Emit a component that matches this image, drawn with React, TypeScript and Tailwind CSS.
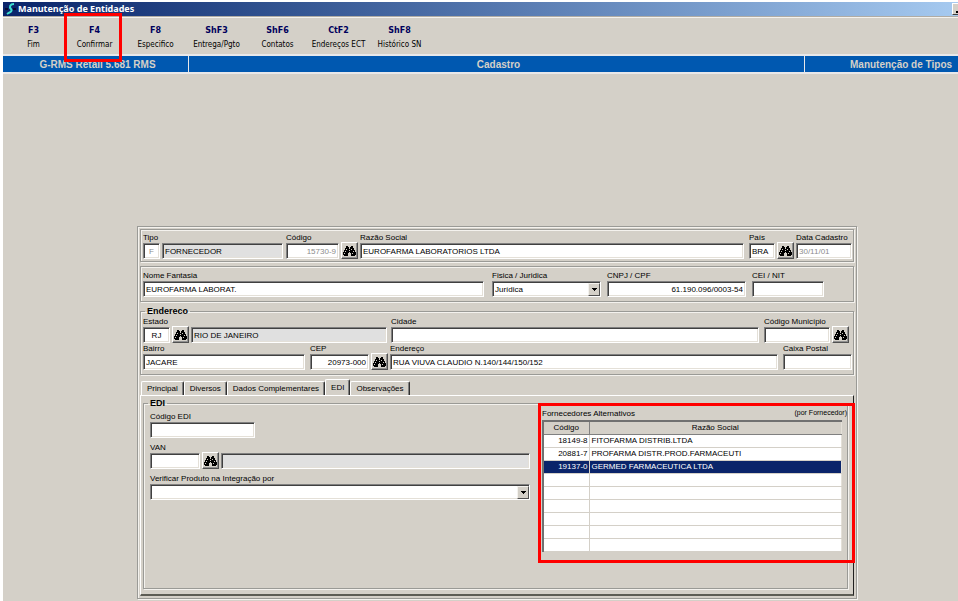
import { useId } from "react";
import type { ReactNode } from "react";

const sunken =
  "block h-4 w-full min-w-0 rounded-none border border-t-[#808080] border-l-[#808080] border-b-white border-r-white px-[2px] text-[8px] leading-[12px] shadow-[inset_1px_1px_0_#404040,inset_-1px_-1px_0_#e4e0d8] outline-none";
const etched =
  "border border-[#9a9a96] shadow-[inset_1px_1px_0_#f4f2ee,1px_1px_0_#f4f2ee]";
const caption = "h-[11px] text-[8px] leading-[11px] whitespace-nowrap";

type FieldProps = {
  label?: string;
  name?: string;
  value?: string;
  className: string;
  tone?: string;
};

function Field({ label, name, value = "", className, tone = "bg-white text-black" }: FieldProps) {
  const id = useId();
  return (
    <div className={`flex flex-col ${className}`}>
      {label && (
        <label htmlFor={id} className={caption}>
          {label}
        </label>
      )}
      <input
        id={id}
        aria-label={label ? undefined : name}
        defaultValue={value}
        className={`${sunken} ${tone}`}
      />
    </div>
  );
}

function Select({ label, options, className }: { label: string; options: string[]; className: string }) {
  const id = useId();
  return (
    <div className={`flex flex-col ${className}`}>
      <label htmlFor={id} className={caption}>
        {label}
      </label>
      <div className="relative">
        <select id={id} className={`${sunken} appearance-none bg-white pt-px`}>
          {options.map((o) => (
            <option key={o}>{o}</option>
          ))}
        </select>
        <span className="pointer-events-none absolute top-[2px] right-[1px] flex h-[13px] w-3 items-center justify-center border border-t-[#f4f2ee] border-l-[#f4f2ee] border-r-[#505050] border-b-[#505050] bg-[#d4d0c8]">
          <svg width="7" height="4" viewBox="0 0 7 4" shapeRendering="crispEdges">
            <path d="M1 0h5v1h-1v1h-1v1h-1v-1h-1v-1h-1z" fill="#000" />
          </svg>
        </span>
      </div>
    </div>
  );
}

function SearchButton({ name }: { name: string }) {
  return (
    <button
      type="button"
      aria-label={name}
      className="flex h-[17px] w-[17px] shrink-0 items-center justify-center border border-t-white border-l-white border-r-[#505050] border-b-[#505050] bg-[#d4d0c8] shadow-[inset_-1px_-1px_0_#909090]"
    >
      <svg width="13" height="10" viewBox="0 0 13 10" shapeRendering="crispEdges">
        <path
          d="M3 0h2v1h1v2h1V1h1V0h2v2h1v2h1v2h1v3h-1v1H8V7H7V6H6v1H5v3H1V9H0V6h1V4h1V2h1z"
          fill="#000"
        />
        <path
          d="M3 3h1v1H3zM8 3h1v1H8zM2 5h1v1H2zM10 5h1v1h-1zM1 7h1v1H1zM9 7h1v1H9zM6 4h1v1H6z"
          fill="#d4d0c8"
        />
      </svg>
    </button>
  );
}

const actions = [
  ["F3", "Fim"],
  ["F4", "Confirmar"],
  ["F8", "Especifico"],
  ["ShF3", "Entrega/Pgto"],
  ["ShF6", "Contatos"],
  ["CtF2", "Endereços ECT"],
  ["ShF8", "Histórico SN"],
];

const suppliers = [
  ["18149-8", "FITOFARMA DISTRIB.LTDA"],
  ["20881-7", "PROFARMA DISTR.PROD.FARMACEUTI"],
  ["19137-0", "GERMED FARMACEUTICA LTDA"],
  ["", ""],
  ["", ""],
  ["", ""],
  ["", ""],
  ["", ""],
  ["", ""],
];
const selectedRow = 2;

function Tab({ children, active = false }: { children: ReactNode; active?: boolean }) {
  return (
    <button
      type="button"
      role="tab"
      aria-selected={active}
      className={`rounded-t-[2px] border border-b-0 border-t-white border-l-white border-r-[#303030] px-[5px] text-[8px] leading-[13px] whitespace-nowrap shadow-[inset_-1px_0_0_#808080] ${
        active ? "-mb-px h-[17px] bg-[#d4d0c8] pb-px" : "h-[14px]"
      }`}
    >
      {children}
    </button>
  );
}

function SupplierTable() {
  return (
    <table className="w-full table-fixed border-collapse border border-t-2 border-l-2 border-t-[#707070] border-l-[#707070] border-r-[#e4e0d8] border-b-[#e4e0d8] bg-white text-[8px] leading-[12px]">
      <colgroup>
        <col className="w-[46px]" />
        <col />
      </colgroup>
      <thead>
        <tr className="h-[13px] bg-[#d4d0c8]">
          <th className="border-r border-b border-[#808080] p-0 font-normal">Código</th>
          <th className="border-b border-[#808080] p-0 font-normal">Razão Social</th>
        </tr>
      </thead>
      <tbody>
        {suppliers.map(([code, name], i) => (
          <tr key={i} className={i === selectedRow ? "h-[13px] bg-[#0a246a] text-white" : "h-[13px]"}>
            <td className="border-r border-b border-[#d4d0c8] p-0 pr-px text-right">{code}</td>
            <td className="border-b border-[#d4d0c8] p-0 pl-[2px] whitespace-nowrap">{name}</td>
          </tr>
        ))}
      </tbody>
    </table>
  );
}

export default function App() {
  return (
    <div className="flex min-h-screen flex-col overflow-hidden bg-white pt-[2px] pl-[3px] font-['Liberation_Sans',Arial,sans-serif] text-black">
      <header className="flex h-[14px] items-center bg-linear-to-r from-[#0a246a] to-[#a6caf0] pl-[2px]">
        <svg width="11" height="12" viewBox="0 0 11 12" fill="none">
          <path d="M9 1C5 1 4 4 6 6S5 9 2 11" stroke="#3fe0d0" strokeWidth="2" />
          <path d="M0 6h3M8 6h3" stroke="#0a0a30" strokeWidth="2" />
        </svg>
        <h1 className="ml-[2px] flex-1 font-['Noto_Sans',Tahoma,sans-serif] text-[9px] leading-[12px] font-bold text-white">
          Manutenção de Entidades
        </h1>
        <button
          type="button"
          aria-label="Minimizar"
          className="-mr-2 flex h-3 w-[14px] items-end border border-t-white border-l-white border-r-[#404040] border-b-[#404040] bg-[#d4d0c8] pb-px pl-[3px]"
        >
          <span className="block h-[2px] w-[6px] bg-black" />
        </button>
      </header>

      <div className="flex flex-1 flex-col bg-[#d4d0c8]">
        <nav className="flex h-[38px] border-t border-[#b0aca4] shadow-[inset_0_1px_0_#f4f2ee]">
          {actions.map(([key, text], i) => (
            <button
              key={key}
              type="button"
              className="relative flex w-[61px] flex-col items-center pt-2 whitespace-nowrap"
            >
              <span className="font-['DejaVu_Sans',Verdana,sans-serif] text-[8px] leading-[12px] font-bold text-[#00005c]">
                {key}
              </span>
              <span className="mt-[2px] font-['DejaVu_Sans_Condensed','DejaVu_Sans',sans-serif] text-[8px] leading-[12px]">
                {text}
              </span>
              {i === 1 && (
                <span className="pointer-events-none absolute -top-1 left-0 z-10 h-[49px] w-[58px] border-3 border-[#ff0000]" />
              )}
            </button>
          ))}
        </nav>

        <div className="flex h-5 border-y-2 border-[#e8e8ea] bg-[#0058b0] text-[10px] leading-[17px] font-bold whitespace-nowrap text-[#d4d0c8]">
          <div className="w-[186px] border-r border-[#e8e8ea] pl-1 text-center">G-RMS Retail 5.681 RMS</div>
          <div className="flex-1 border-r border-[#e8e8ea] pl-1 text-center">Cadastro</div>
          <div className="w-[153px] pl-[45px]">Manutenção de Tipos</div>
        </div>

        <main className={`mt-[152px] mr-[101px] mb-px ml-[134px] flex flex-col p-[2px] ${etched}`}>
          <section className={`flex items-end gap-[2px] py-[2px] pr-px pl-[2px] ${etched}`}>
            <Field label="Tipo" value="F" className="w-[17px]" tone="bg-white text-center text-[#8c8c8c]" />
            <Field name="Descrição do tipo" value="FORNECEDOR" className="w-[121px]" tone="bg-[#e0e0e0]" />
            <Field label="Código" value="15730-9" className="ml-px w-[53px]" tone="bg-white text-right text-[#8c8c8c]" />
            <SearchButton name="Pesquisar código" />
            <Field label="Razão Social" value="EUROFARMA LABORATORIOS LTDA" className="flex-1" />
            <Field label="País" value="BRA" className="ml-[3px] w-[26px]" />
            <SearchButton name="Pesquisar país" />
            <Field label="Data Cadastro" value="30/11/01" className="w-[56px]" tone="bg-white text-[#8c8c8c]" />
          </section>

          <section className={`mt-1 flex items-end gap-[6px] pt-[3px] pr-[29px] pb-1 pl-[2px] ${etched}`}>
            <Field label="Nome Fantasia" value="EUROFARMA LABORAT." className="mr-[2px] flex-1" />
            <Select label="Fisica / Juridica" options={["Jurídica", "Física"]} className="w-[109px]" />
            <Field label="CNPJ / CPF" value="61.190.096/0003-54" className="w-[139px]" tone="bg-white text-right" />
            <Field label="CEI / NIT" className="w-[72px]" />
          </section>

          <fieldset className={`mt-1 min-w-0 pr-px pb-1 pl-[2px] ${etched}`}>
            <legend className="ml-[2px] px-[2px] text-[9px] leading-[10px] font-bold">Endereco</legend>
            <div className="flex items-end gap-[2px]">
              <Field label="Estado" value="RJ" className="w-[27px]" tone="bg-white text-center" />
              <SearchButton name="Pesquisar estado" />
              <Field name="Nome do estado" value="RIO DE JANEIRO" className="w-[196px]" tone="bg-[#e0e0e0]" />
              <Field label="Cidade" className="ml-[2px] flex-1" />
              <Field label="Código Município" className="ml-[3px] w-[66px]" />
              <SearchButton name="Pesquisar município" />
              <span className="w-px" />
            </div>
            <div className="flex items-end gap-[2px]">
              <Field label="Bairro" value="JACARE" className="w-[162px]" />
              <Field label="CEP" value="20973-000" className="ml-[3px] w-[59px]" tone="bg-white text-right" />
              <SearchButton name="Pesquisar CEP" />
              <Field label="Endereço" value="RUA VIUVA CLAUDIO N.140/144/150/152" className="flex-1" />
              <Field label="Caixa Postal" className="ml-[3px] w-[69px]" />
            </div>
          </fieldset>

          <div role="tablist" className="mt-1 flex items-end pl-px">
            <Tab>Principal</Tab>
            <Tab>Diversos</Tab>
            <Tab>Dados Complementares</Tab>
            <Tab active>EDI</Tab>
            <Tab>Observações</Tab>
          </div>

          <div
            role="tabpanel"
            className="border border-t-white border-l-white border-r-[#202020] border-b-2 border-b-[#5c5c54] px-[2px] pt-[2px] pb-[5px]"
          >
            <fieldset className={`mr-[3px] flex min-h-[191px] min-w-0 ${etched}`}>
              <legend className="ml-1 px-[2px] text-[9px] leading-[10px] font-bold">EDI</legend>
              <div className="flex min-w-0 flex-1 flex-col gap-1 pt-[3px] pl-[6px]">
                <Field label="Código EDI" className="w-[105px]" />
                <div className="flex items-end gap-[2px]">
                  <Field label="VAN" className="w-[50px]" />
                  <SearchButton name="Pesquisar VAN" />
                  <Field name="Descrição da VAN" className="flex-1" tone="bg-[#e0e0e0]" />
                </div>
                <Select label="Verificar Produto na Integração por" options={[""]} className="w-full" />
              </div>
              <div className="relative ml-3 w-[305px]">
                <div className="flex justify-between whitespace-nowrap">
                  <h2 className="text-[8px] leading-[12px]">Fornecedores Alternativos</h2>
                  <span className="text-[7px] leading-[10px]">(por Fornecedor)</span>
                </div>
                <div className="mr-[5px]">
                  <SupplierTable />
                </div>
                <span className="pointer-events-none absolute -top-[5px] -right-2 -left-1 h-[160px] border-3 border-[#ff0000]" />
              </div>
            </fieldset>
          </div>
        </main>
      </div>
    </div>
  );
}
